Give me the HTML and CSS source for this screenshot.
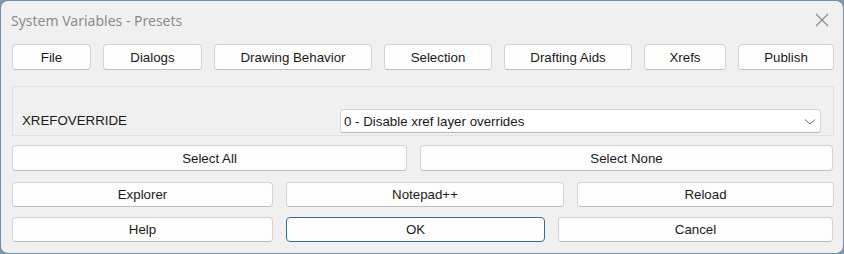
FILE: index.html
```html
<!DOCTYPE html>
<html lang="en">
<head>
    <meta charset="UTF-8">
    <title>System Variables - Presets</title>
    <link rel="stylesheet" href="styles.css">
</head>
<body>
    <div class="window">
        <!-- Title bar -->
        <div class="titlebar">
            <span class="title">System Variables - Presets</span>
            <svg class="close" width="14" height="14" viewBox="0 0 14 14">
                <path d="M1 1 L13 13 M13 1 L1 13" stroke="#8a8a8a" stroke-width="1.1" fill="none"/>
            </svg>
        </div>

        <div class="tabs">
            <button class="btn w-file">File</button>
            <button class="btn w-dialogs">Dialogs</button>
            <button class="btn w-drawing">Drawing Behavior</button>
            <button class="btn w-selection">Selection</button>
            <button class="btn w-drafting">Drafting Aids</button>
            <button class="btn w-xrefs">Xrefs</button>
            <button class="btn w-publish">Publish</button>
        </div>

        <div class="panel">
            <div class="var-name">XREFOVERRIDE</div>
            <div class="combo">
                <span>0 - Disable xref layer overrides</span>
                <svg width="12" height="8" viewBox="0 0 12 8">
                    <path d="M1 1.5 L6 6 L11 1.5" stroke="#6a6a6a" stroke-width="1" fill="none"/>
                </svg>
            </div>
        </div>

        <div class="row row-select">
            <button class="btn w-all">Select All</button>
            <button class="btn w-none">Select None</button>
        </div>

        <div class="row row-tools">
            <button class="btn w-explorer">Explorer</button>
            <button class="btn w-notepad">Notepad++</button>
            <button class="btn w-reload">Reload</button>
        </div>

        <div class="row row-actions">
            <button class="btn w-help">Help</button>
            <button class="btn btn-default w-ok">OK</button>
            <button class="btn w-cancel">Cancel</button>
        </div>
    </div>
</body>
</html>
```

FILE: styles.css
```css
* {
    margin: 0;
    padding: 0;
    box-sizing: border-box;
}

body {
    background-color: #7f98b2;
    font-family: 'Liberation Sans', Arial, sans-serif;
    font-size: 13.3px;
    color: #1a1a1a;
    width: 844px;
    height: 254px;
    overflow: hidden;
}

.window {
    width: 844px;
    height: 254px;
    background-color: #f0f0f0;
    border: 1px solid #6f8cab;
    border-radius: 8px;
    padding: 0 9px 0 11px;
    display: flex;
    flex-direction: column;
}

/* title bar */
.titlebar {
    height: 43px;
    display: flex;
    align-items: center;
    justify-content: space-between;
    padding-bottom: 5px;
}

.title {
    font-family: 'Noto Sans', sans-serif;
    font-size: 14px;
    color: #8c8c8c;
    margin-left: -1px;
}

.close {
    margin-right: 5px;
}

/* buttons */
.btn {
    font-family: 'Liberation Sans', Arial, sans-serif;
    font-size: 13.3px;
    color: #1a1a1a;
    background-color: #fdfdfd;
    border: 1px solid #d3d3d3;
    border-bottom-color: #bdbdbd;
    border-radius: 4px;
    height: 26px;
}

.btn-default {
    border: 1px solid #2f6ea5;
}

.tabs {
    display: flex;
    gap: 12px;
}

.w-file { width: 79px; }
.w-dialogs { width: 99px; }
.w-drawing { width: 158px; }
.w-selection { width: 108px; }
.w-drafting { width: 128px; }
.w-xrefs { width: 82px; }
.w-publish { width: 96px; }

/* variable panel */
.panel {
    margin-top: 16px;
    height: 50px;
    border: 1px solid #e1e1e1;
    display: flex;
    align-items: flex-end;
    justify-content: space-between;
    padding: 0 12px 2px 9px;
}

.var-name {
    padding-bottom: 5px;
}

.combo {
    width: 481px;
    height: 24px;
    background-color: #fff;
    border: 1px solid #d6d6d6;
    border-bottom-color: #b5b5b5;
    border-radius: 3px;
    display: flex;
    align-items: center;
    justify-content: space-between;
    padding: 1px 4px 0 3px;
}

/* lower rows */
.row {
    display: flex;
    gap: 13px;
}

.row-select { margin-top: 9px; }
.row-tools { margin-top: 11px; }
.row-actions { margin-top: 10px; }

.row-tools .btn,
.row-actions .btn {
    height: 25px;
}

.w-all { width: 395px; }
.w-none { width: 413px; }
.w-explorer { width: 261px; }
.w-notepad { width: 278px; }
.w-reload { width: 257px; }
.w-help { width: 261px; }
.w-ok { width: 259px; }
.w-cancel { width: 275px; }
```
